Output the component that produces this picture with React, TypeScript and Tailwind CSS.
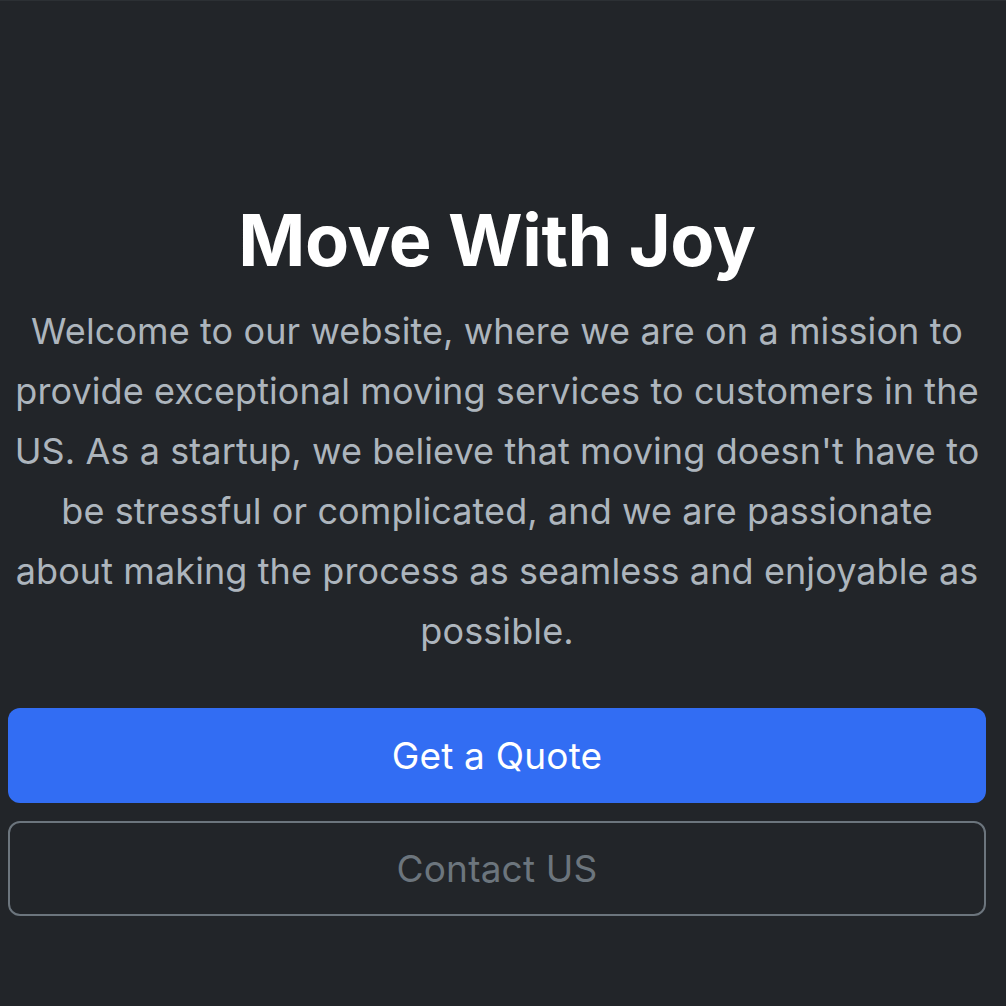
export default function App() {
  return (
    <div className="min-h-[1006px] w-full bg-[#222529] border-t border-[#2c3034] font-['Inter',sans-serif]">
      <div className="ml-[8px] w-[978px] pt-[196px] flex flex-col items-center">
        <h1 className="text-[72px] leading-[86px] font-bold text-white tracking-[-0.4px]">
          Move With Joy
        </h1>
        <p className="mt-[18px] w-[966px] text-[36px] leading-[60px] tracking-[0.1px] text-[#adb5bd] text-center">
          Welcome to our website, where we are on a mission to provide exceptional moving
          services to customers in the US. As a startup, we believe that moving doesn't have to
          be stressful or complicated, and we are passionate about making the process as seamless
          and enjoyable as possible.
        </p>
        <div className="mt-[47px] w-full flex flex-col gap-[18px]">
          <button className="w-full h-[95px] rounded-[12px] bg-[#326df3] text-white text-[37px] tracking-[0.2px]">
            Get a Quote
          </button>
          <button className="w-full h-[95px] rounded-[12px] border-2 border-[#6c757d] text-[#6c757d] text-[37px] tracking-[0.2px]">
            Contact US
          </button>
        </div>
      </div>
    </div>
  );
}
